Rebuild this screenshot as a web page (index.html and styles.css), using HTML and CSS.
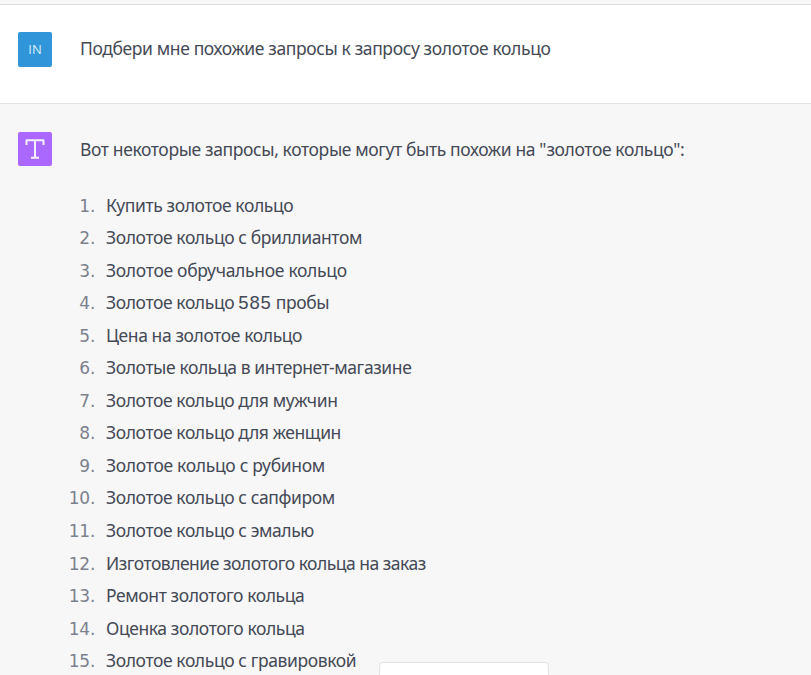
FILE: index.html
```html
<!DOCTYPE html>
<html lang="ru">
<head>
<meta charset="utf-8">
<title>Чат</title>
<link rel="stylesheet" href="styles.css">
</head>
<body>
<main class="chat">
<section class="message user">
<div class="avatar avatar-user">IN</div>
<p class="text">Подбери мне похожие запросы к запросу золотое кольцо</p>
</section>
<section class="message bot">
<div class="avatar avatar-bot"><svg viewBox="0 0 34 34" width="34" height="34"><path d="M8.500 13V8.200H25.500V13M17 8V25.700M13 25.700H21" fill="none" stroke="#f6efff" stroke-width="2" stroke-linejoin="round"/></svg></div>
<div class="body">
<p class="text">Вот некоторые запросы, которые могут быть похожи на "золотое кольцо":</p>
<ol class="list">
<li>Купить золотое кольцо</li>
<li>Золотое кольцо с бриллиантом</li>
<li class="loose">Золотое обручальное кольцо</li>
<li><span>Золотое кольцо <span class="num">585</span> пробы</span></li>
<li>Цена на золотое кольцо</li>
<li>Золотые кольца в интернет-магазине</li>
<li>Золотое кольцо для мужчин</li>
<li>Золотое кольцо для женщин</li>
<li class="loose">Золотое кольцо с рубином</li>
<li>Золотое кольцо с сапфиром</li>
<li>Золотое кольцо с эмалью</li>
<li class="tight">Изготовление золотого кольца на заказ</li>
<li>Ремонт золотого кольца</li>
<li>Оценка золотого кольца</li>
<li>Золотое кольцо с гравировкой</li>
</ol>
</div>
</section>
<div class="popup"></div>
</main>
</body>
</html>
```
FILE: styles.css
```css
*, *::before { box-sizing: border-box; }
body { margin: 0; background: #f7f7f7; color: #444956; font: 17.5px/32.56px "Noto Sans", sans-serif; letter-spacing: -0.4px; }
.chat { position: relative; height: 675px; overflow: hidden; padding-top: 4px; }
.message { display: flex; gap: 28px; padding: 28px 18px; }
.user { height: 100px; padding-top: 27px; background: #fff; border-top: 1px solid #dfdfdf; border-bottom: 1px solid #e2e2e2; }
.avatar { width: 34px; height: 34px; flex: none; border-radius: 2px; color: #fff; }
.avatar-user { height: 35px; background: #3095d9; color: #d9edfa; font: 13px/35px "Open Sans", sans-serif; letter-spacing: 0; text-align: center; }
.avatar-bot { background: #ab68ff; }
.avatar svg { display: block; }
.text { margin: 0; white-space: nowrap; letter-spacing: -0.38px; }
.body { padding-top: 1px; }
.list { list-style: none; counter-reset: n; margin: 23px 0 0 -20px; padding: 0; }
.list li { counter-increment: n; display: flex; height: 32.56px; white-space: nowrap; }
.list li::before { content: counter(n) "."; width: 35px; padding-top: 1px; margin-right: 11px; text-align: right; color: #7b818d; font-family: "DejaVu Sans", sans-serif; font-size: 17px; letter-spacing: -0.3px; }
.list .loose { letter-spacing: -0.31px; }
.list .tight { letter-spacing: -0.5px; }
.num { font-family: "Liberation Sans", sans-serif; font-size: 18.5px; line-height: 1; letter-spacing: 0.8px; }
.popup { position: absolute; left: 379px; top: 662px; width: 170px; height: 30px; background: #fff; border: 1px solid #e2e2e2; border-radius: 4px; }
```
